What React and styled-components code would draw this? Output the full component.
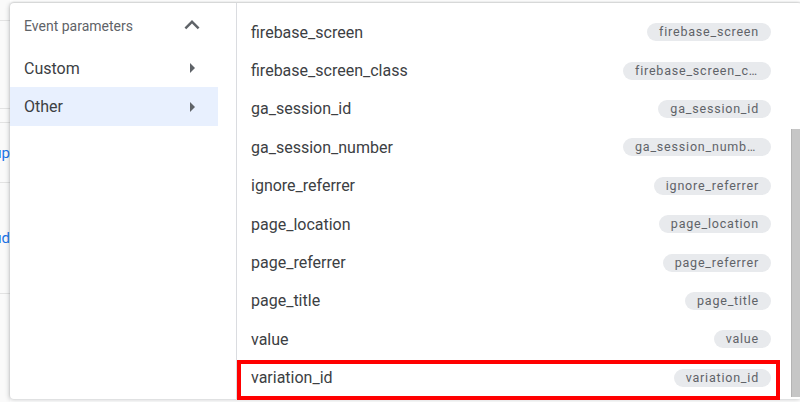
import React from "react";
import styled, { createGlobalStyle } from "styled-components";

const GlobalStyle = createGlobalStyle`
  html, body {
    margin: 0;
    padding: 0;
    background: #ffffff;
    overflow: hidden;
  }
  body {
    font-family: Roboto, "Liberation Sans", Arial, sans-serif;
  }
`;

const Screen = styled.div`
  position: relative;
  width: 800px;
  height: 402px;
  overflow: hidden;
  background: #ffffff;
`;

// page behind the menu, only a sliver shows on the left
const Backdrop = styled.div`
  display: flex;
  flex-direction: column;
  width: 10px;
  height: 100%;
  overflow: hidden;
  background: #fafafa;
`;

const BackSection = styled.div`
  height: ${(p) => p.h}px;
  flex-shrink: 0;
  display: flex;
  align-items: center;
  justify-content: flex-end;
  border-bottom: 1px solid #e3e3e3;
  white-space: nowrap;
  color: #1a73e8;
  font-size: 15px;
`;

const Menu = styled.div`
  position: absolute;
  left: 10px;
  top: 3px;
  width: 792px;
  height: 396px;
  display: flex;
  background: #ffffff;
  border-radius: 4px;
  box-shadow: 0 -1px 2px rgba(60, 64, 67, 0.2), -1px 1px 4px rgba(60, 64, 67, 0.25);
`;

const LeftPane = styled.div`
  width: 208px;
  padding-right: 18px;
  border-right: 1px solid #dadce0;
  display: flex;
  flex-direction: column;
`;

const PaneHeader = styled.div`
  height: 46px;
  display: flex;
  align-items: center;
  justify-content: space-between;
  padding: 0 11px 0 14px;
  color: #5f6368;
  font-size: 14px;
  svg {
    margin-top: -2px;
  }
`;

const Category = styled.div`
  height: 38.4px;
  display: flex;
  align-items: center;
  justify-content: space-between;
  padding: 0 14px;
  font-size: 16px;
  color: #3c4043;
  background: ${(p) => (p.active ? "#e8f0fe" : "transparent")};
`;

const RightPane = styled.div`
  flex: 1;
  display: flex;
`;

const List = styled.div`
  width: 546px;
  padding-top: 10px;
  display: flex;
  flex-direction: column;
`;

const Row = styled.div`
  position: relative;
  height: 38.4px;
  flex-shrink: 0;
  display: flex;
  align-items: center;
  justify-content: space-between;
  padding: 0 12px 0 14px;
  font-size: 16px;
  color: #3c4043;
  ${(p) =>
    p.marked &&
    `
    &::after {
      content: "";
      position: absolute;
      top: 1px;
      left: 0;
      right: 3px;
      bottom: -3px;
      border: 4px solid #ff0000;
    }
  `}
`;

const Chip = styled.span`
  height: 18px;
  line-height: 18px;
  max-width: 124px;
  padding: 0 12px;
  border-radius: 9px;
  background: #e8eaed;
  color: #5f6368;
  font-size: 12.5px;
  letter-spacing: 0.8px;
  white-space: nowrap;
  overflow: hidden;
  text-overflow: ellipsis;
`;

const ScrollTrack = styled.div`
  flex: 1;
  padding-left: 8px;
  display: flex;
  flex-direction: column;
`;

const Thumb = styled.div`
  margin-top: 126px;
  height: 268px;
  width: 10px;
  background: #c6c6c6;
  border-left: 1px solid #b4b4b4;
`;

const ChevronUp = () => (
  <svg width="30" height="30" viewBox="0 0 24 24" fill="#5f6368">
    <path d="M12 8l-6 6 1.41 1.41L12 10.83l4.59 4.58L18 14z" />
  </svg>
);

const ArrowRight = () => (
  <svg width="24" height="24" viewBox="0 0 24 24" fill="#5f6368">
    <path d="M10 17l5-5-5-5v10z" />
  </svg>
);

const params = [
  "firebase_screen",
  "firebase_screen_class",
  "ga_session_id",
  "ga_session_number",
  "ignore_referrer",
  "page_location",
  "page_referrer",
  "page_title",
  "value",
  "variation_id",
];

export default function App() {
  return (
    <>
      <GlobalStyle />
      <Screen>
        <Backdrop>
          <BackSection h={20} />
          <BackSection h={87} />
          <BackSection h={13} />
          <BackSection h={59}>Group</BackSection>
          <BackSection h={110}>Cloud</BackSection>
        </Backdrop>
        <Menu>
          <LeftPane>
            <PaneHeader>
              Event parameters
              <ChevronUp />
            </PaneHeader>
            <Category>
              Custom
              <ArrowRight />
            </Category>
            <Category active>
              Other
              <ArrowRight />
            </Category>
          </LeftPane>
          <RightPane>
            <List>
              {params.map((name) => (
                <Row key={name} marked={name === "variation_id"}>
                  {name}
                  <Chip>{name}</Chip>
                </Row>
              ))}
            </List>
            <ScrollTrack>
              <Thumb />
            </ScrollTrack>
          </RightPane>
        </Menu>
      </Screen>
    </>
  );
}
